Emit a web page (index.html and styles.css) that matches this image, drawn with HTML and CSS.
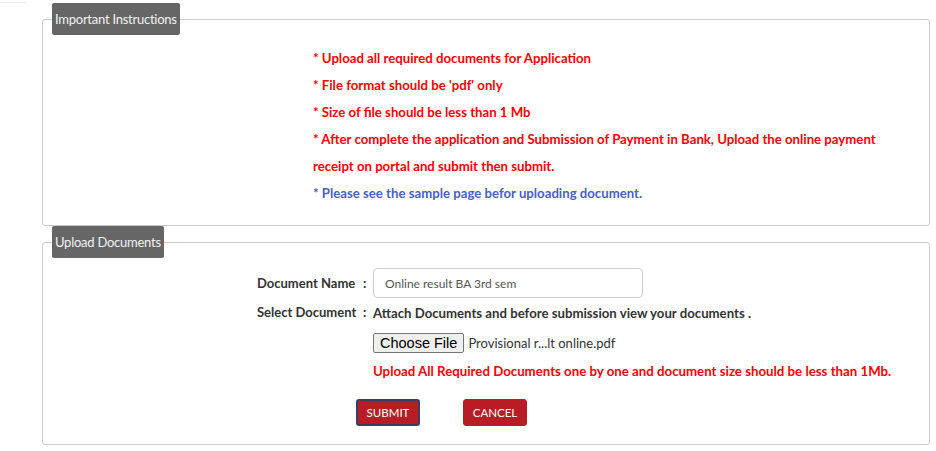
FILE: index.html
```html
<!DOCTYPE html>
<html lang="en">
<head>
<meta charset="utf-8">
<title>Upload Documents</title>
<link rel="stylesheet" href="styles.css">
</head>
<body>
<div class="topline"></div>
<fieldset class="panel panel-instr">
  <legend class="panel-title">Important Instructions</legend>
  <div class="instr">
    <p class="instr-line">* Upload all required documents for Application</p>
    <p class="instr-line">* File format should be 'pdf' only</p>
    <p class="instr-line">* Size of file should be less than 1 Mb</p>
    <p class="instr-line">* After complete the application and Submission of Payment in Bank, Upload the online payment receipt on portal and submit then submit.</p>
    <p class="instr-line instr-blue">* Please see the sample page befor uploading document.</p>
  </div>
</fieldset>
<fieldset class="panel panel-upload">
  <legend class="panel-title">Upload Documents</legend>
  <div class="form">
    <div class="form-row row-name">
      <span class="label">Document Name</span>
      <span class="colon">:</span>
      <div class="value"><input class="text-input" type="text" value="Online result BA 3rd sem"></div>
    </div>
    <div class="form-row row-select">
      <span class="label">Select Document</span>
      <span class="colon">:</span>
      <div class="value"><span class="attach">Attach Documents and before submission view your documents .</span></div>
    </div>
    <div class="form-row row-file">
      <span class="label"></span>
      <span class="colon"></span>
      <div class="value file">
        <button class="file-btn" type="button">Choose File</button>
        <span class="file-name">Provisional r...lt online.pdf</span>
      </div>
    </div>
    <div class="form-row row-note">
      <span class="label"></span>
      <span class="colon"></span>
      <div class="value"><span class="note">Upload All Required Documents one by one and document size should be less than 1Mb.</span></div>
    </div>
    <div class="actions">
      <button class="btn btn-submit" type="button">SUBMIT</button>
      <button class="btn btn-cancel" type="button">CANCEL</button>
    </div>
  </div>
</fieldset>
</body>
</html>
```
FILE: styles.css
```css
* { box-sizing: border-box; }
html, body { margin: 0; padding: 0; background: #fff; }
body {
  width: 936px;
  font-family: Lato, "Open Sans", "Liberation Sans", sans-serif;
  font-size: 14px;
  color: #333;
}
.topline {
  width: 27px;
  height: 1px;
  margin-top: 2px;
  background: #eeeeee;
}
.panel {
  margin: 0 0 0 42px;
  width: 888px;
  border: 1px solid #cccccc;
  border-radius: 3px;
  padding: 0 9px;
  min-width: 0;
}
.panel-title {
  background: #666666;
  color: #f2f2f2;
  font-size: 13px;
  letter-spacing: -0.25px;
  line-height: 20px;
  padding: 6px 3px 6px 3px;
  border-radius: 2px;
  margin: 0;
}
.panel-instr { height: 223px; }
.instr {
  margin: 10px 0 0 261px;
  width: 590px;
}
.instr-line {
  margin: 0;
  line-height: 27px;
  color: #ff0000;
  font-weight: bold;
  font-size: 13.2px;
}
.instr-blue { color: #4a5fbf; }

.panel-upload { height: 219px; margin-top: 0; }
.form {
  margin-top: 10px;
  padding-left: 205px;
}
.form-row {
  display: grid;
  grid-template-columns: 106px 10px 1fr;
  align-items: center;
}
.label, .colon {
  font-weight: bold;
  font-size: 13px;
  color: #333;
}
.row-name { height: 30px; }
.row-select { height: 28px; }
.row-file { height: 34px; }
.row-note { height: 20px; }
.text-input {
  width: 270px;
  height: 30px;
  border: 1px solid #cccccc;
  border-radius: 4px;
  padding: 0 11px;
  font-family: Lato, "Open Sans", "Liberation Sans", sans-serif;
  font-size: 12px;
  color: #555;
  outline: none;
}
.attach { font-weight: bold; font-size: 13.2px; color: #333; }
.file { display: flex; align-items: center; gap: 4px; }
.file-btn {
  font-family: "Liberation Sans", Arial, sans-serif;
  font-size: 14.5px;
  height: 20px;
  line-height: 16px;
  padding: 0 6px;
  background: #efefef;
  border: 1px solid #767676;
  border-radius: 2px;
  color: #000;
}
.file-name { font-size: 13px; color: #333; }
.note { font-weight: bold; font-size: 13.25px; color: #ff0000; }
.actions {
  display: flex;
  gap: 43px;
  margin-top: 19px;
  padding-left: 99px;
}
.btn {
  width: 64px;
  height: 27px;
  border-radius: 3px;
  background: #b81d25;
  color: #fff;
  font-family: Lato, "Open Sans", "Liberation Sans", sans-serif;
  font-size: 11.5px;
  border: 1px solid #b81d25;
  padding: 0;
}
.btn-submit { border: 2px solid #3b3f5e; }
```
